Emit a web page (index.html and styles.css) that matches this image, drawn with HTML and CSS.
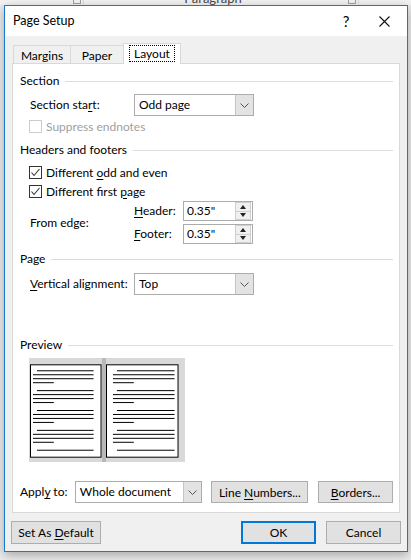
FILE: index.html
```html
<!DOCTYPE html>
<html lang="en">
<head>
    <meta charset="UTF-8">
    <title>Page Setup</title>
    <link rel="stylesheet" href="styles.css">
</head>
<body>

    <!-- Word ribbon peeking out behind the dialog -->
    <div class="ribbon">
        <span class="launcher"></span>
        <span class="ribbon-sep"></span>
        <span class="ribbon-label">Paragraph</span>
        <span class="launcher"></span>
        <span class="ribbon-sep"></span>
    </div>

    <div class="dialog">
        <div class="titlebar">
            <span class="title">Page Setup</span>
            <span class="help">?</span>
            <span class="close">
                <svg width="11" height="11" viewBox="0 0 11 11"><path d="M0.5 0.5L10.5 10.5M10.5 0.5L0.5 10.5" stroke="#111" stroke-width="1.1" fill="none"/></svg>
            </span>
        </div>

        <div class="dialog-body">
            <!-- Tabs -->
            <div class="tabs">
                <div class="tab tab-margins">Margins</div>
                <div class="tab tab-paper">Paper</div>
                <div class="tab tab-layout active"><span class="focus">Layout</span></div>
            </div>

            <div class="panel">
                <!-- Section -->
                <div class="group-title">Section</div>
                <div class="row section-start">
                    <span class="row-label">Section sta<u>r</u>t:</span>
                    <div class="combo combo-short">
                        <span class="combo-value">Odd page</span>
                        <span class="combo-btn"><svg width="9" height="5" viewBox="0 0 9 5"><path d="M0.5 0.5L4.5 4.5L8.5 0.5" stroke="#555" fill="none"/></svg></span>
                    </div>
                </div>
                <div class="check-row suppress disabled">
                    <span class="checkbox"></span>
                    <span>Suppress endnotes</span>
                </div>

                <!-- Headers and footers -->
                <div class="group-title headers-title">Headers and footers</div>
                <div class="check-row odd-even">
                    <span class="checkbox"><svg width="11" height="11" viewBox="0 0 11 11"><path d="M1.5 5.5L4 8.5L9.5 2" stroke="#333" stroke-width="1.1" fill="none"/></svg></span>
                    <span>Different <u>o</u>dd and even</span>
                </div>
                <div class="check-row first-page">
                    <span class="checkbox"><svg width="11" height="11" viewBox="0 0 11 11"><path d="M1.5 5.5L4 8.5L9.5 2" stroke="#333" stroke-width="1.1" fill="none"/></svg></span>
                    <span>Different first <u>p</u>age</span>
                </div>
                <div class="row edge">
                    <span class="row-label">From edge:</span>
                    <div class="spins">
                        <div class="spin-row">
                            <span class="spin-label"><u>H</u>eader:</span>
                            <div class="spin">
                                <span class="spin-value">0.35"</span>
                                <span class="spin-btns">
                                    <span class="spin-btn"><span class="arrow-up"></span></span>
                                    <span class="spin-btn"><span class="arrow-down"></span></span>
                                </span>
                            </div>
                        </div>
                        <div class="spin-row">
                            <span class="spin-label"><u>F</u>ooter:</span>
                            <div class="spin">
                                <span class="spin-value">0.35"</span>
                                <span class="spin-btns">
                                    <span class="spin-btn"><span class="arrow-up"></span></span>
                                    <span class="spin-btn"><span class="arrow-down"></span></span>
                                </span>
                            </div>
                        </div>
                    </div>
                </div>

                <!-- Page -->
                <div class="group-title page-title">Page</div>
                <div class="row valign">
                    <span class="row-label"><u>V</u>ertical alignment:</span>
                    <div class="combo combo-short">
                        <span class="combo-value">Top</span>
                        <span class="combo-btn"><svg width="9" height="5" viewBox="0 0 9 5"><path d="M0.5 0.5L4.5 4.5L8.5 0.5" stroke="#555" fill="none"/></svg></span>
                    </div>
                </div>

                <!-- Preview -->
                <div class="group-title preview-title">Preview</div>
                <div class="preview">
                    <svg class="page" width="72" height="94" viewBox="0 0 72 94">
                        <rect x="0.5" y="0.5" width="71" height="93" fill="#fff" stroke="#000"/>
                        <path stroke="#000" fill="none" d="M7 6.5H64M3 10.5H64M3 14.5H64M3 18.5H24M7 26.5H64M3 30.5H64M3 34.5H64M3 38.5H24M7 46.5H64M3 50.5H64M3 54.5H64M3 58.5H24M7 66.5H64M3 70.5H64M3 74.5H64M3 78.5H24M7 86.5H64"/>
                    </svg>
                    <span class="gutter"></span>
                    <svg class="page" width="73" height="94" viewBox="0 0 73 94">
                        <rect x="0.5" y="0.5" width="72" height="93" fill="#fff" stroke="#000"/>
                        <path stroke="#000" fill="none" d="M11 6.5H69M7 10.5H69M7 14.5H69M7 18.5H28M11 26.5H69M7 30.5H69M7 34.5H69M7 38.5H28M11 46.5H69M7 50.5H69M7 54.5H69M7 58.5H28M11 66.5H69M7 70.5H69M7 74.5H69M7 78.5H28M11 86.5H69"/>
                    </svg>
                </div>

                <div class="apply-row">
                    <span class="apply-label">Appl<u>y</u> to:</span>
                    <div class="combo combo-apply">
                        <span class="combo-value">Whole document</span>
                        <span class="combo-btn"><svg width="9" height="5" viewBox="0 0 9 5"><path d="M0.5 0.5L4.5 4.5L8.5 0.5" stroke="#555" fill="none"/></svg></span>
                    </div>
                    <button class="btn btn-lines">Line <u>N</u>umbers...</button>
                    <button class="btn btn-borders"><u>B</u>orders...</button>
                </div>
            </div>

            <!-- Dialog buttons -->
            <div class="footer">
                <button class="btn btn-default">Set As <u>D</u>efault</button>
                <span class="spacer"></span>
                <button class="btn btn-ok">OK</button>
                <button class="btn btn-cancel">Cancel</button>
            </div>
        </div>
    </div>

</body>
</html>
```

FILE: styles.css
```css
/* General page */
body {
    margin: 0;
    width: 411px;
    height: 560px;
    overflow: hidden;
    background-color: #ececec;
    font-family: 'Lato', 'Noto Sans', sans-serif;
    font-size: 12px;
    line-height: 16px;
    color: #000;
    white-space: nowrap;
}

u {
    text-underline-offset: 2px;
}

/* Ribbon strip behind the dialog */
.ribbon {
    display: flex;
    height: 5px;
    overflow: hidden;
    background-color: #f3f3f3;
}

.launcher {
    width: 8px;
    height: 4px;
    margin-left: 73px;
    border: 1px solid #9a9a9a;
    border-top: none;
    box-sizing: border-box;
}

.launcher + .ribbon-sep + .ribbon-label + .launcher {
    margin-left: 6px;
}

.ribbon-sep {
    width: 1px;
    margin-left: 2px;
    background-color: #d4d4d4;
}

.ribbon-label {
    width: 258px;
    text-align: center;
    margin-top: -10px;
    font-size: 13px;
    color: #444;
}

/* Dialog frame */
.dialog {
    width: 404px;
    margin-left: 4px;
    box-sizing: border-box;
    border: 1px solid #1979ca;
    background-color: #f0f0f0;
    box-shadow: 0 3px 10px rgba(0, 0, 0, 0.3);
}

.titlebar {
    display: flex;
    align-items: center;
    height: 30px;
    padding-left: 8px;
    background-color: #fff;
    font-size: 12.5px;
}

.title {
    flex: 1;
}

.help {
    width: 30px;
    text-align: center;
    font-size: 15px;
}

.close {
    width: 46px;
    display: flex;
    justify-content: center;
}

.dialog-body {
    padding: 7px 7px 7px 7px;
}

/* Tabs */
.tabs {
    position: relative;
    display: flex;
    align-items: flex-end;
    margin-left: 1px;
    margin-bottom: -1px;
}

.tab {
    height: 18px;
    box-sizing: border-box;
    border: 1px solid #d9d9d9;
    border-bottom: none;
    margin-right: -1px;
    margin-bottom: 1px;
    display: flex;
    align-items: center;
    justify-content: center;
    padding-top: 2px;
}

.tab-margins { width: 58px; }
.tab-paper { width: 54px; }

.tab.active {
    width: 58px;
    height: 21px;
    margin-bottom: 0;
    background-color: #fff;
    padding-top: 0;
    padding-bottom: 1px;
}

.focus {
    outline: 1px dotted #000;
    padding: 0 4px;
    line-height: 15px;
}

/* Tab panel */
.panel {
    background-color: #fff;
    border: 1px solid #d9d9d9;
    padding: 9px 6px 9px 7px;
}

.group-title {
    display: flex;
    align-items: center;
    gap: 6px;
    height: 16px;
}

.group-title::after {
    content: "";
    flex: 1;
    height: 1px;
    background-color: #dcdcdc;
}

.headers-title { margin-top: 9px; }
.page-title { margin-top: 7px; }
.preview-title { margin-top: 42px; }

.row {
    display: flex;
    align-items: center;
    padding-left: 10px;
}

.row-label {
    width: 104px;
}

.section-start { margin-top: 5px; }
.valign { margin-top: 6px; }

/* Combo boxes */
.combo {
    display: flex;
    height: 22px;
    box-sizing: border-box;
    border: 1px solid #acacac;
    background-color: #fff;
}

.combo-short { width: 120px; }

.combo-value {
    flex: 1;
    padding-left: 4px;
    line-height: 20px;
}

.combo-btn {
    width: 17px;
    display: flex;
    align-items: center;
    justify-content: center;
    background-color: #e3e3e3;
    border-left: 1px solid #c4c4c4;
}

/* Check boxes */
.check-row {
    display: flex;
    align-items: center;
    gap: 4px;
    height: 13px;
    padding-left: 9px;
}

.checkbox {
    width: 13px;
    height: 13px;
    box-sizing: border-box;
    border: 1px solid #333;
    background-color: #fff;
    display: flex;
    align-items: center;
    justify-content: center;
}

.disabled {
    color: #a0a0a0;
}

.disabled .checkbox {
    border-color: #cccccc;
}

.suppress { margin-top: 4px; }
.odd-even { margin-top: 8px; }
.first-page { margin-top: 6px; }

/* From edge spin boxes */
.edge { margin-top: 3px; }

.spins {
    display: flex;
    flex-direction: column;
    gap: 3px;
}

.spin-row {
    display: flex;
    align-items: center;
}

.spin-label {
    width: 49px;
}

.spin {
    display: flex;
    width: 70px;
    height: 20px;
    box-sizing: border-box;
    border: 1px solid #acacac;
}

.spin-value {
    flex: 1;
    padding-left: 3px;
    line-height: 18px;
}

.spin-btns {
    display: flex;
    flex-direction: column;
    width: 16px;
    margin: 0 1px 0 0;
}

.spin-btn {
    flex: 1;
    display: flex;
    align-items: center;
    justify-content: center;
    background-color: #f0f0f0;
    border: 1px solid #cfcfcf;
}

.spin-btn + .spin-btn {
    border-top: none;
}

.arrow-up {
    width: 0;
    height: 0;
    border-left: 3px solid transparent;
    border-right: 3px solid transparent;
    border-bottom: 4px solid #222;
}

.arrow-down {
    width: 0;
    height: 0;
    border-left: 3px solid transparent;
    border-right: 3px solid transparent;
    border-top: 4px solid #222;
}

/* Preview */
.preview {
    display: flex;
    width: 156px;
    height: 104px;
    box-sizing: border-box;
    margin: 5px 0 0 9px;
    padding: 6px 6px 4px 1px;
    background-color: #d9d9d9;
}

.page {
    display: block;
}

.gutter {
    width: 5px;
    margin: -6px 0 -4px 0;
    background-color: #b8b8b8;
}

/* Apply to row */
.apply-row {
    display: flex;
    align-items: center;
    margin-top: 19px;
}

.apply-label {
    width: 55px;
}

.combo-apply {
    width: 128px;
    margin-right: 9px;
}

/* Buttons */
.btn {
    height: 22px;
    box-sizing: border-box;
    border: 1px solid #adadad;
    background-color: #e1e1e1;
    font-family: inherit;
    font-size: 12px;
    color: #000;
    padding: 0;
}

.btn-lines {
    width: 97px;
    margin-right: 10px;
}

.btn-borders {
    width: 75px;
}

.footer {
    display: flex;
    margin: 8px -1px 0 -1px;
}

.footer .btn {
    height: 23px;
}

.spacer {
    flex: 1;
}

.btn-default { width: 90px; }

.btn-ok {
    width: 75px;
    margin-right: 10px;
    border: 2px solid #0078d7;
}

.btn-cancel { width: 75px; }
```
